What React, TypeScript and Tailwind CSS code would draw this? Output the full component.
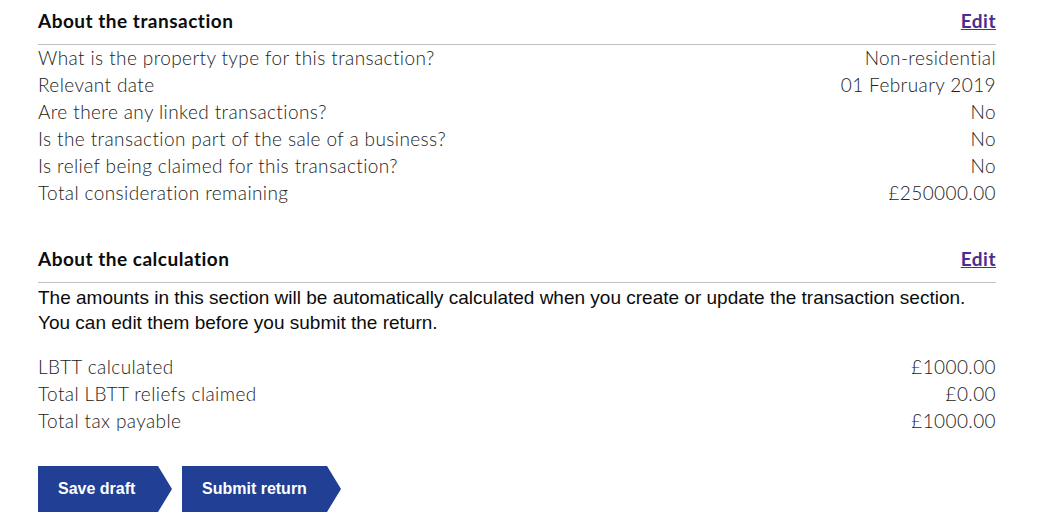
import React from "react";

const rows1: [string, string][] = [
  ["What is the property type for this transaction?", "Non-residential"],
  ["Relevant date", "01 February 2019"],
  ["Are there any linked transactions?", "No"],
  ["Is the transaction part of the sale of a business?", "No"],
  ["Is relief being claimed for this transaction?", "No"],
  ["Total consideration remaining", "£250000.00"],
];

const rows2: [string, string][] = [
  ["LBTT calculated", "£1000.00"],
  ["Total LBTT reliefs claimed", "£0.00"],
  ["Total tax payable", "£1000.00"],
];

function Heading({ title }: { title: string }) {
  return (
    <div className="flex items-start justify-between h-[45px] pt-[8px] border-b border-[#bfc1c3]">
      <h2 className="text-[19px] leading-[26px] tracking-[0.5px] font-bold text-[#0b0c0c] [font-family:Lato,'Open_Sans',sans-serif]">
        {title}
      </h2>
      <a
        href="#"
        className="text-[19px] leading-[26px] tracking-[0.5px] font-bold text-[#4c2c92] underline [font-family:Lato,'Open_Sans',sans-serif]"
      >
        Edit
      </a>
    </div>
  );
}

function Rows({ rows }: { rows: [string, string][] }) {
  return (
    <div className="flex flex-col">
      {rows.map(([k, v]) => (
        <div
          key={k}
          className="flex justify-between items-center h-[27px] text-[19px] tracking-[0.4px] text-[#222222] font-light [font-family:Lato,sans-serif]"
        >
          <span>{k}</span>
          <span>{v}</span>
        </div>
      ))}
    </div>
  );
}

export default function App() {
  return (
    <div className="bg-white min-h-[528px] w-[1046px]">
      <div className="ml-[38px] w-[958px]">
        <Heading title="About the transaction" />
        <Rows rows={rows1} />
        <div className="mt-[31px]">
          <Heading title="About the calculation" />
        </div>
        <p className="pt-[2px] text-[19px] leading-[25px] text-[#0b0c0c] [font-family:'Liberation_Sans',Arial,sans-serif]">
          The amounts in this section will be automatically calculated when you create or update the transaction section.
          <br />
          You can edit them before you submit the return.
        </p>
        <div className="mt-[19px]">
          <Rows rows={rows2} />
        </div>
        <div className="mt-[31px] flex gap-[10px]">
          <button className="h-[46px] w-[134px] bg-[#213f94] text-white text-[16px] font-bold pl-[20px] text-left [font-family:'Liberation_Sans',Arial,sans-serif] [clip-path:polygon(0_0,calc(100%-14px)_0,100%_50%,calc(100%-14px)_100%,0_100%)]">
            Save draft
          </button>
          <button className="h-[46px] w-[159px] bg-[#213f94] text-white text-[16px] font-bold pl-[20px] text-left [font-family:'Liberation_Sans',Arial,sans-serif] [clip-path:polygon(0_0,calc(100%-14px)_0,100%_50%,calc(100%-14px)_100%,0_100%)]">
            Submit return
          </button>
        </div>
      </div>
    </div>
  );
}
